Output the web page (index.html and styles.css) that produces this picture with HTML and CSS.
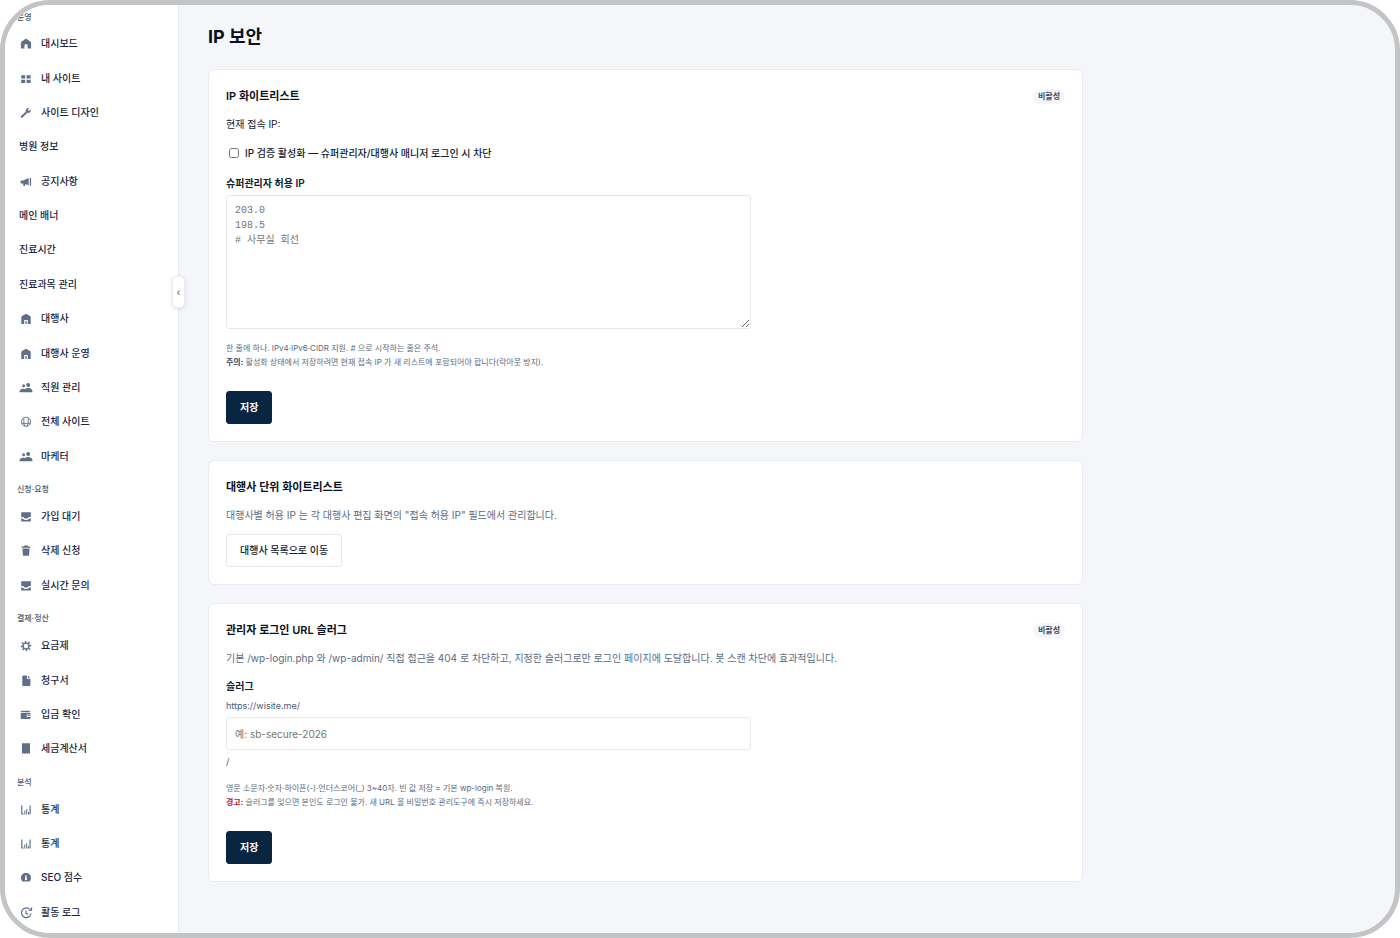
FILE: index.html
```html
<!DOCTYPE html>
<html lang="ko">
<head>
    <meta charset="UTF-8">
    <meta name="viewport" content="width=device-width, initial-scale=1.0">
    <title>IP 보안</title>
    <link rel="stylesheet" href="styles.css">
</head>
<body>
    <!-- Icon set -->
    <svg class="icon-set" aria-hidden="true">
        <symbol id="i-home" viewBox="0 0 14 14"><path d="M7 1.500 2.500 4.800Q1.900 5.300 1.900 6.100V11.500h3.500V8.600a1.600 1.600 0 0 1 3.200 0v2.900h3.500V6.100q0-.8-.6-1.300z"/></symbol>
        <symbol id="i-building" viewBox="0 0 14 14"><path d="M7 1.700 3 3.900Q2.300 4.300 2.300 5.200V12h2.900V8h3.600v4h2.900V5.200q0-.9-.7-1.300z"/><path d="M6.100 9h1.800v3H6.100z" opacity=".7"/></symbol>
        <symbol id="i-grid" viewBox="0 0 14 14"><path d="M2.200 3.200h4v3.200h-4zM7.600 3.200h4v3.200h-4zM2.200 7.800h4V11h-4zM7.600 7.800h4V11h-4z"/></symbol>
        <symbol id="i-wrench" viewBox="0 0 14 14"><path d="M11.700 3.400 9.900 5.100 8.700 3.900l1.700-1.800C8.800 1.500 6.800 2.600 6.700 4.500c0 .4 0 .7.2 1.100L2.100 10c-.5.500-.4 1.100 0 1.500s1 .4 1.500-.1l4.600-4.600c2.200.7 4.200-1.200 3.500-3.400z"/></symbol>
        <symbol id="i-horn" viewBox="0 0 14 14"><path d="M1.600 5.600h2.700L9.700 3.100v7.200L6.200 9v1.900H4.300V8.400H1.600zM10.800 3h1.300v7.400h-1.300z"/></symbol>
        <symbol id="i-users" viewBox="0 0 14 14"><circle cx="9.200" cy="3.900" r="2"/><circle cx="4.600" cy="4.800" r="1.500"/><path d="M.4 11.300c0-2.300 1.500-3.500 3.800-3.500.8 0 1.300.1 1.800.4.800-.8 1.900-1.200 3.200-1.200 2.700 0 4.400 1.500 4.400 4.300z"/></symbol>
        <symbol id="i-globe" viewBox="0 0 14 14"><path fill="none" stroke="currentColor" stroke-width=".9" d="M7 2.200a4.600 4.600 0 1 0 0 9.200 4.600 4.600 0 0 0 0-9.200zM4.800 3v5.400M9.200 3v5.400M2.700 8.400h8.600M4.800 8.400 6 11.200M9.200 8.400 8 11.200"/></symbol>
        <symbol id="i-inbox" viewBox="0 0 14 14"><path d="M2.200 2.200h9.600v4.900H9.600c-.5 1-1.300 1.500-2.600 1.500S4.900 8.100 4.400 7.100H2.200zM2.200 8.600h1.600c.8 1 1.800 1.500 3.200 1.500s2.400-.5 3.200-1.500h1.600v2.900H2.200z"/></symbol>
        <symbol id="i-trash" viewBox="0 0 14 14"><path d="M5.300 1.600h3.400l.5.800h2.300v1.300h-9V2.400h2.300zM3.400 4.600h7.200l-.5 6.300q-.1.900-1 .9H4.900q-.9 0-1-.9z"/></symbol>
        <symbol id="i-gear" viewBox="0 0 14 14"><circle cx="7" cy="7" r="2.900" fill="none" stroke="currentColor" stroke-width="1.300"/><path fill="none" stroke="currentColor" stroke-width="1.500" d="M7 4.200 6.200 2M9 5l1.500-2M9.900 7l2.300-.8M9.200 9l2 1.500M7 9.900l.8 2.200M5 9.100 3.500 11M4.100 7l-2.300.8M4.900 5l-2-1.500"/></symbol>
        <symbol id="i-file" viewBox="0 0 14 14"><path d="M4.300 1.400h3.600v3.700h3.500v5.900q0 1-1 1H4.300q-1 0-1-1V2.400q0-1 1-1zM8.800 1.600l2.500 2.600H8.800z"/></symbol>
        <symbol id="i-wallet" viewBox="0 0 14 14"><path d="M2.800 2.700h7.600l.8 1.500H2.800q-1.100 0-1.100-.7t1.100-.8zM1.700 5h9.800v1.500H7.700v2.400h3.800v1.300q0 .8-.8.800H2.500q-.8 0-.8-.8zM8.600 7.200h3v1.100h-3z"/></symbol>
        <symbol id="i-receipt" viewBox="0 0 14 14"><path d="M3 1.300h8v10.600l-1.300-.8-1.400.8-1.300-.8-1.300.8-1.400-.8-1.300.8z"/></symbol>
        <symbol id="i-chart" viewBox="0 0 14 14"><path d="M2.200 2.400h1.200v9H2.200zM3.400 10.500h1.300v.9H3.400zM5.300 7.600h1v3.800h-1zM7.200 6.200h1v5.200h-1zM9 8.900h1v2.500H9zM10.500 2.600h1.200v8.500l-1.200.7z"/></symbol>
        <symbol id="i-gauge" viewBox="0 0 14 14"><path fill-rule="evenodd" d="M7 2c3 0 5 2 5 4.700 0 1.700-.7 3-1.700 3.900H3.700C2.700 9.700 2 8.400 2 6.700 2 4 4 2 7 2zM6.600 4 5.900 8.200c-.1 1.500 2.200 1.500 2.100 0L7.400 4z"/></symbol>
        <symbol id="i-history" viewBox="0 0 14 14"><path fill="none" stroke="currentColor" stroke-width="1.200" d="M10.200 3A4.800 4.800 0 1 0 12 7.500M7 4.400v2.900l2.100 1.100"/><path d="M9.200 4.700h3.900V1.100z"/></symbol>
    </svg>

    <div class="frame">
        <aside class="sidebar">
            <nav class="nav">
                <p class="nav-label">운영</p>
                <a class="nav-item" href="#"><svg class="icon"><use href="#i-home"/></svg>대시보드</a>
                <a class="nav-item" href="#"><svg class="icon"><use href="#i-grid"/></svg>내 사이트</a>
                <a class="nav-item" href="#"><svg class="icon"><use href="#i-wrench"/></svg>사이트 디자인</a>
                <a class="nav-item" href="#">병원 정보</a>
                <a class="nav-item" href="#"><svg class="icon"><use href="#i-horn"/></svg>공지사항</a>
                <a class="nav-item" href="#">메인 배너</a>
                <a class="nav-item" href="#">진료시간</a>
                <a class="nav-item" href="#">진료과목 관리</a>
                <a class="nav-item" href="#"><svg class="icon"><use href="#i-building"/></svg>대행사</a>
                <a class="nav-item" href="#"><svg class="icon"><use href="#i-building"/></svg>대행사 운영</a>
                <a class="nav-item" href="#"><svg class="icon"><use href="#i-users"/></svg>직원 관리</a>
                <a class="nav-item" href="#"><svg class="icon"><use href="#i-globe"/></svg>전체 사이트</a>
                <a class="nav-item" href="#"><svg class="icon"><use href="#i-users"/></svg>마케터</a>

                <p class="nav-label">신청·요청</p>
                <a class="nav-item" href="#"><svg class="icon"><use href="#i-inbox"/></svg>가입 대기</a>
                <a class="nav-item" href="#"><svg class="icon"><use href="#i-trash"/></svg>삭제 신청</a>
                <a class="nav-item" href="#"><svg class="icon"><use href="#i-inbox"/></svg>실시간 문의</a>

                <p class="nav-label">결제·정산</p>
                <a class="nav-item" href="#"><svg class="icon"><use href="#i-gear"/></svg>요금제</a>
                <a class="nav-item" href="#"><svg class="icon"><use href="#i-file"/></svg>청구서</a>
                <a class="nav-item" href="#"><svg class="icon"><use href="#i-wallet"/></svg>입금 확인</a>
                <a class="nav-item" href="#"><svg class="icon"><use href="#i-receipt"/></svg>세금계산서</a>

                <p class="nav-label">분석</p>
                <a class="nav-item" href="#"><svg class="icon"><use href="#i-chart"/></svg>통계</a>
                <a class="nav-item" href="#"><svg class="icon"><use href="#i-chart"/></svg>통계</a>
                <a class="nav-item" href="#"><svg class="icon"><use href="#i-gauge"/></svg>SEO 점수</a>
                <a class="nav-item" href="#"><svg class="icon"><use href="#i-history"/></svg>활동 로그</a>
            </nav>
            <button class="sidebar-toggle" type="button" aria-label="메뉴 접기">‹</button>
        </aside>

        <main class="main">
            <h1 class="page-title">IP 보안</h1>

            <form class="card">
                <div class="card-head">
                    <h2 class="card-title">IP 화이트리스트</h2>
                    <span class="badge">비활성</span>
                </div>
                <p class="text">현재 접속 IP:</p>
                <label class="check"><input type="checkbox">IP 검증 활성화 — 슈퍼관리자/대행사 매니저 로그인 시 차단</label>
                <label class="field-label" for="allow-ip">슈퍼관리자 허용 IP</label>
                <textarea class="control control-area" id="allow-ip" placeholder="203.0&#10;198.5&#10;# 사무실 회선"></textarea>
                <p class="help">한 줄에 하나. IPv4·IPv6·CIDR 지원. # 으로 시작하는 줄은 주석.<br><strong>주의:</strong> 활성화 상태에서 저장하려면 현재 접속 IP 가 새 리스트에 포함되어야 합니다(락아웃 방지).</p>
                <button class="btn btn-primary" type="button">저장</button>
            </form>

            <section class="card">
                <div class="card-head">
                    <h2 class="card-title">대행사 단위 화이트리스트</h2>
                </div>
                <p class="text text-muted">대행사별 허용 IP 는 각 대행사 편집 화면의 "접속 허용 IP" 필드에서 관리합니다.</p>
                <a class="btn btn-outline" href="#">대행사 목록으로 이동</a>
            </section>

            <form class="card">
                <div class="card-head">
                    <h2 class="card-title">관리자 로그인 URL 슬러그</h2>
                    <span class="badge">비활성</span>
                </div>
                <p class="text text-muted">기본 /wp-login.php 와 /wp-admin/ 직접 접근을 404 로 차단하고, 지정한 슬러그로만 로그인 페이지에 도달합니다. 봇 스캔 차단에 효과적입니다.</p>
                <label class="field-label" for="slug">슬러그</label>
                <span class="affix">https://wisite.me/</span>
                <input class="control control-input" id="slug" type="text" placeholder="예: sb-secure-2026">
                <span class="affix">/</span>
                <p class="help">영문 소문자·숫자·하이픈(-)·언더스코어(_) 3~40자. 빈 값 저장 = 기본 wp-login 복원.<br><strong class="danger">경고:</strong> 슬러그를 잊으면 본인도 로그인 불가. 새 URL 을 비밀번호 관리도구에 즉시 저장하세요.</p>
                <button class="btn btn-primary" type="button">저장</button>
            </form>
        </main>
    </div>
</body>
</html>
```
FILE: styles.css
```css
* {
    margin: 0;
    padding: 0;
    box-sizing: border-box;
}

body {
    background: #fff;
    font-family: Inter, "Noto Sans CJK KR", sans-serif;
    font-size: 10px;
    color: #0f1b33;
}

button,
input,
textarea {
    font-family: inherit;
    font-size: inherit;
}

.icon-set {
    display: none;
}

.frame {
    display: flex;
    min-height: 100vh;
    border: 5px solid #c3c4c6;
    border-radius: 50px;
    background: #f4f6fa;
    overflow: hidden;
}

/* Sidebar */
.sidebar {
    position: relative;
    flex: 0 0 174px;
    display: flex;
    background: #fff;
    border-right: 1px solid #e6e9ef;
}

.nav {
    flex: 1;
    display: flex;
    flex-direction: column;
    padding-bottom: 4px;
}

.nav-label {
    height: 26px;
    padding: 8px 12px 0;
    font-size: 8px;
    line-height: 16px;
    font-weight: 500;
    color: #4a5a73;
}

.nav-label:first-child {
    height: 21px;
    padding-top: 4px;
}

.nav-item {
    flex: 1;
    display: flex;
    align-items: center;
    gap: 8px;
    padding: 0 14px;
    line-height: 20px;
    font-weight: 500;
    color: #1a2540;
    text-decoration: none;
}

.icon {
    width: 14px;
    height: 14px;
    margin-top: 2px;
    fill: currentColor;
    color: #5f6f8a;
}

.sidebar-toggle {
    position: absolute;
    top: 271px;
    right: -7px;
    width: 13px;
    height: 32px;
    border: 1px solid #e9ecf2;
    border-radius: 5px;
    background: #fff;
    box-shadow: 0 1px 4px rgba(15, 27, 51, 0.12);
    color: #4a5a73;
    line-height: 28px;
    cursor: pointer;
}

/* Content */
.main {
    flex: 1;
    padding: 20px 30px 30px 29px;
}

.page-title {
    margin-bottom: 20px;
    font-size: 18px;
    line-height: 24px;
    font-weight: 700;
    color: #0a1020;
}

.card {
    max-width: 875px;
    margin-bottom: 18px;
    padding: 17px;
    border: 1px solid #e8ebf1;
    border-radius: 6px;
    background: #fff;
}

.card-head {
    display: flex;
    align-items: center;
    justify-content: space-between;
    margin-bottom: 9px;
}

.card-title {
    font-size: 11px;
    line-height: 18px;
    font-weight: 600;
    color: #0a1020;
}

.badge {
    padding: 0 5px;
    border-radius: 8px;
    background: #f4f6fa;
    font-size: 8px;
    line-height: 15px;
    font-weight: 600;
    color: #3b4a63;
}

.text {
    margin-bottom: 9px;
    line-height: 20px;
}

.text-muted {
    color: #5b6b82;
}

.check {
    display: flex;
    align-items: center;
    gap: 6px;
    margin-bottom: 11px;
    padding-left: 3px;
    line-height: 20px;
    font-weight: 500;
}

.check input {
    width: 10px;
    height: 10px;
}

.field-label {
    display: block;
    margin-bottom: 3px;
    line-height: 18px;
    font-weight: 600;
}

.control {
    display: block;
    width: 100%;
    max-width: 525px;
    border: 1px solid #e6e8ed;
    border-radius: 3px;
    background: #fff;
    color: #0f1b33;
}

.control::placeholder {
    color: #757575;
}

.control-area {
    height: 134px;
    padding: 7px 8px;
    font-family: "Liberation Mono", "Noto Sans CJK KR", monospace;
    line-height: 15px;
    resize: vertical;
}

.control-input {
    height: 33px;
    margin: 4px 0;
    padding: 0 8px;
}

.affix {
    display: block;
    font-size: 9px;
    line-height: 15px;
    color: #4a5a73;
}

.help {
    margin: 12px 0 22px;
    font-size: 8px;
    line-height: 14px;
    color: #5b6b82;
}

.help strong {
    font-weight: 600;
    color: #3b4a63;
}

.help .danger {
    color: #c0182b;
}

.btn {
    display: block;
    width: fit-content;
    padding: 0 13px;
    border: 1px solid #0a2540;
    border-radius: 3px;
    line-height: 31px;
    font-weight: 500;
    text-decoration: none;
    cursor: pointer;
}

.btn-primary {
    background: #0a2540;
    color: #fff;
    font-weight: 600;
}

.btn-outline {
    border-color: #e6e8ed;
    background: #fff;
    color: #0f1b33;
}
```
